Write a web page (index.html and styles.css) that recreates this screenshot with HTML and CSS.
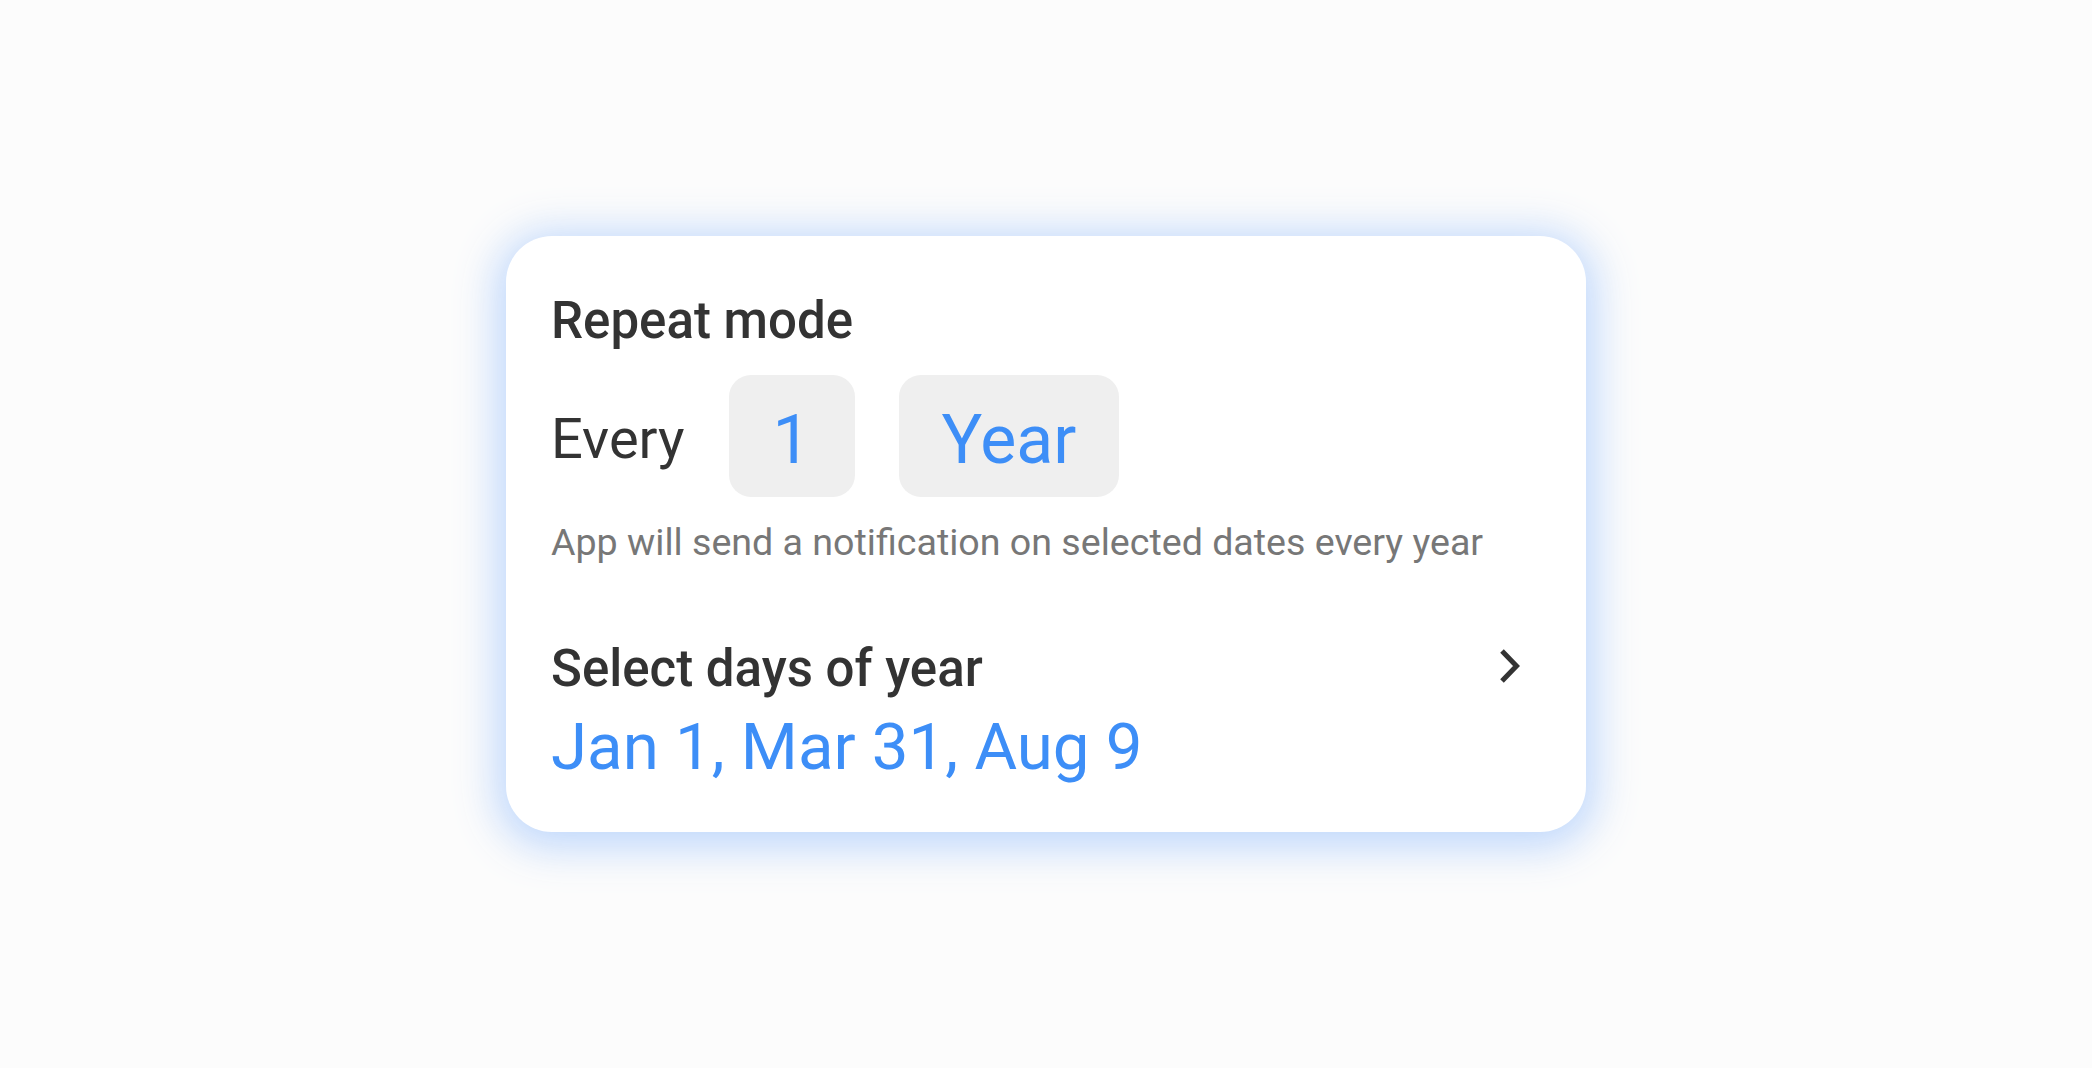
FILE: index.html
```html
<!DOCTYPE html>
<html>
  <head>
    <link rel="stylesheet" href="styles.css">
  </head>
  <body>
    <div class="page">
      <div class="card">
        <div class="title">Repeat mode</div>
        <div class="repeat-row">
          <span class="every">Every</span>
          <button class="pill pill-count">1</button>
          <button class="pill pill-unit">Year</button>
        </div>
        <div class="hint">App will send a notification on selected dates every year</div>

        <div class="days">
          <div class="days-head">
            <span class="days-title">Select days of year</span>
            <svg class="chevron" width="24" height="36" viewBox="0 0 24 36">
              <path d="M4 3 L18.5 18 L4 33" fill="none" stroke="#333" stroke-width="5"/>
            </svg>
          </div>
          <div class="days-value">Jan 1, Mar 31, Aug 9</div>
        </div>
      </div>
    </div>
  </body>
</html>
```

FILE: styles.css
```css
body {
  margin: 0;
  padding: 0;
  background: #fcfcfc;
  font-family: Roboto, "Noto Sans", sans-serif;
}

.page {
  height: 1068px;
  display: flex;
  align-items: center;
  justify-content: center;
}

.card {
  width: 1080px;
  height: 596px;
  box-sizing: border-box;
  padding: 56px 45px 0;
  background: #ffffff;
  border-radius: 46px;
  box-shadow: 0 6px 40px 10px rgba(185, 212, 252, 0.9);
}

.title {
  font-size: 51px;
  line-height: 58px;
  font-weight: 500;
  color: #333333;
}

.repeat-row {
  display: flex;
  align-items: center;
  gap: 44px;
  margin-top: 25px;
}

.every {
  font-size: 56px;
  line-height: 66px;
  color: #333333;
  margin-top: 6px;
}

.pill {
  height: 122px;
  border: none;
  border-radius: 22px;
  background: #efefef;
  font-family: inherit;
  font-size: 68px;
  line-height: 130px;
  color: #3d8ef7;
  padding: 0 43px;
}

.pill-count {
  width: 126px;
  padding: 0;
}

.hint {
  margin-top: 23px;
  font-size: 37.6px;
  line-height: 44px;
  color: #777777;
}

.days {
  margin-top: 76px;
}

.days-head {
  display: flex;
  align-items: center;
  justify-content: space-between;
  padding-right: 19px;
}

.days-title {
  font-size: 51px;
  line-height: 58px;
  font-weight: 500;
  color: #333333;
}

.chevron {
  display: block;
  margin-top: -6px;
}

.days-value {
  margin-top: 10px;
  font-size: 65.4px;
  line-height: 78px;
  color: #3d8ef7;
}
```
